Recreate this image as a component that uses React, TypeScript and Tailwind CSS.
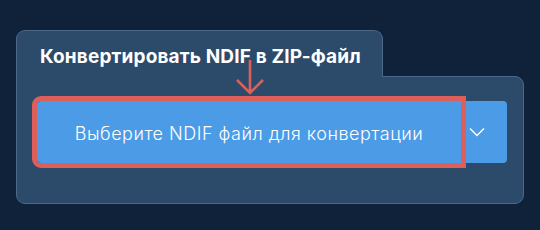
const App = () => {
    return (
        <div className="min-h-screen w-full bg-[#10223a] pt-[30px] pl-4 pr-4 font-['Inter',sans-serif]">
            <div className="relative w-[508px]">
                {/* Tab header */}
                <div className="relative z-10 -mb-px flex h-[47px] w-[367px] items-center rounded-t-[9px] border border-b-0 border-[#4d6889] bg-[#2c4a6a] pl-[23px] pt-[6px]">
                    <h1 className="text-[19px] font-bold tracking-[0.15px] text-white">Конвертировать NDIF в ZIP-файл</h1>
                </div>

                {/* Panel body */}
                <div className="rounded-b-[9px] rounded-tr-[9px] border border-[#4d6889] bg-[#2c4a6a] pb-[40px] pl-5 pr-4 pt-6">
                    <div className="flex h-[62px] rounded-[4px] bg-[#4b9be6]">
                        <button className="flex h-full w-[424px] items-center justify-center rounded-l-[4px] pt-[3px] text-[18px] font-light tracking-[0.5px] text-white outline-[5px] outline-[#dc5f59] outline-solid">
                            Выберите NDIF файл для конвертации
                        </button>
                        <div className="flex flex-1 items-center pl-[8px]">
                            <svg width="16" height="10" viewBox="0 0 16 10" fill="none">
                                <path d="M1 1.5 L8 8.5 L15 1.5" stroke="white" strokeWidth="1.4" />
                            </svg>
                        </div>
                    </div>
                </div>

                {/* Pointer arrow */}
                <svg className="absolute left-[219px] top-[30px] z-20" width="30" height="35" viewBox="0 0 30 35" fill="none">
                    <path d="M15 0 V33 M2 20 L15 33 L28 20" stroke="#dc5f59" strokeWidth="2.6" />
                </svg>
            </div>
        </div>
    );
};

export default App;
